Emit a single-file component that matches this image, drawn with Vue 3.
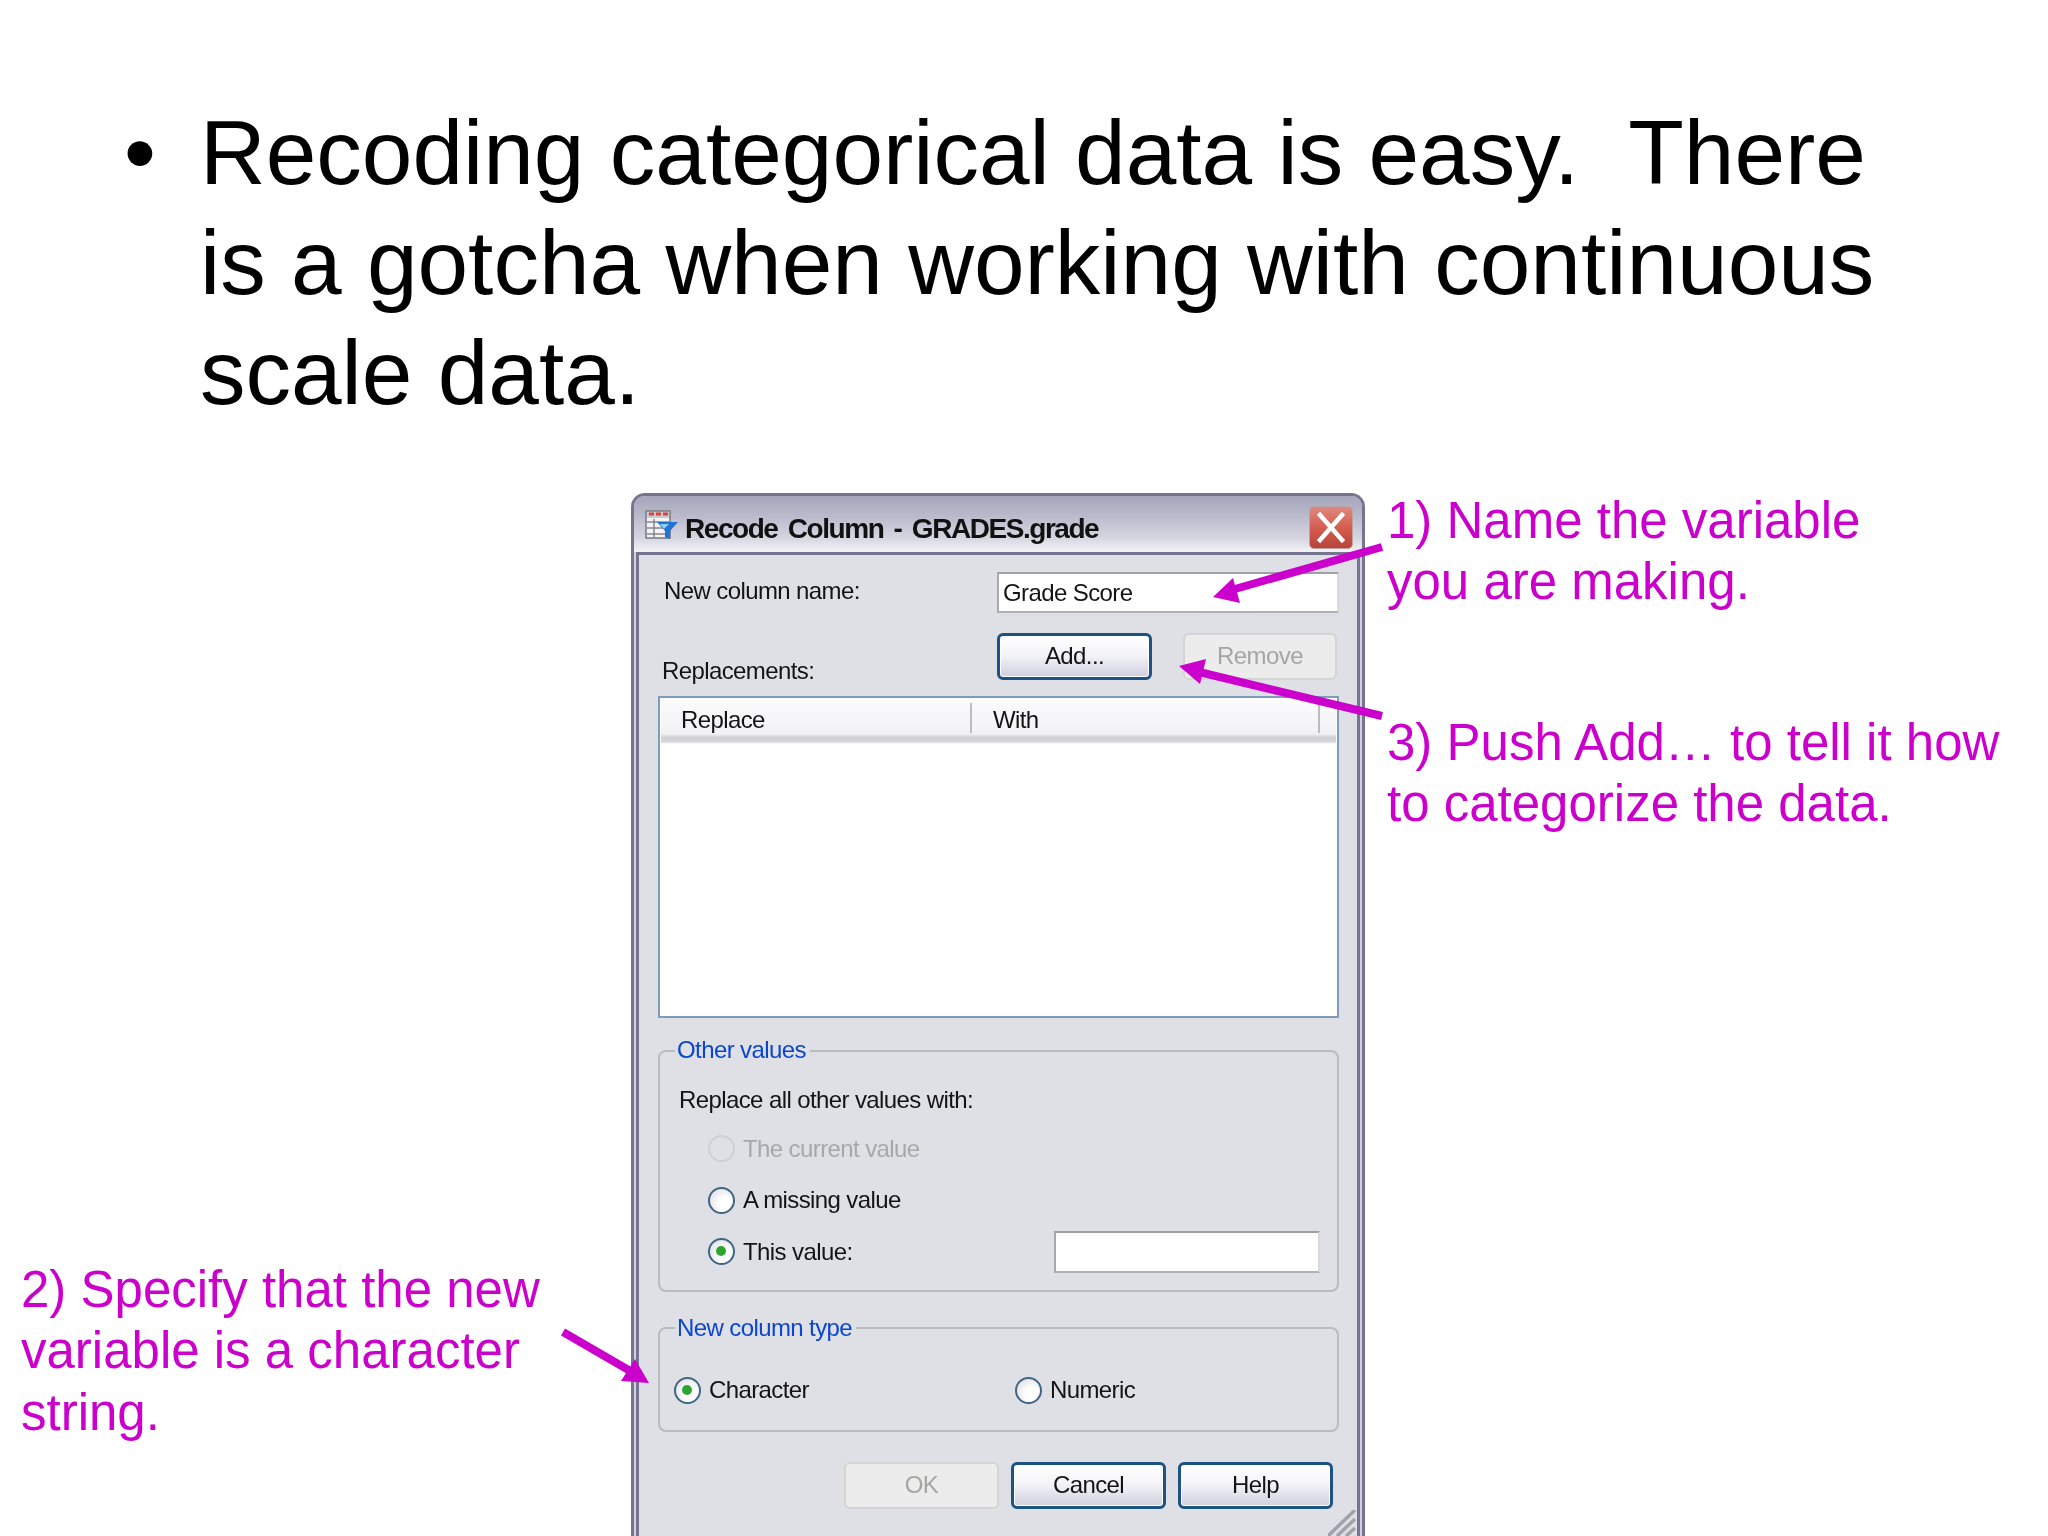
<script setup>
const otherRows = [
  { id: 'current', label: 'The current value', checked: false, disabled: true },
  { id: 'missing', label: 'A missing value', checked: false, disabled: false },
  { id: 'value', label: 'This value:', checked: true, disabled: false, field: true }
]
</script>

<template>
  <div class="slide">
    <div class="bullet">
      <span class="dot">•</span>
      <p class="copy">Recoding categorical data is easy.&nbsp; There<br>is a gotcha when working with continuous<br>scale data.</p>
    </div>

    <div class="window">
      <header class="titlebar">
        <svg class="appicon" viewBox="0 0 33 30" width="33" height="30">
          <rect x="1" y="1" width="24" height="27" fill="#f4f4f4" stroke="#77777f" stroke-width="1.5"/>
          <rect x="2" y="2" width="22" height="6" fill="#c9c9cf"/>
          <path d="M4 4h5M11 4h5M18 4h5" stroke="#d8433c" stroke-width="3"/>
          <path d="M2 12h22M2 18h22M2 24h22M9 9v18" stroke="#85858d" stroke-width="1.5"/>
          <path d="M12 12h21l-8 9v8l-5-2v-6z" fill="#1f74d6"/>
          <path d="M15 14h9l-5 5z" fill="#8fd0f5"/>
        </svg>
        <span class="title">Recode Column - GRADES.grade</span>
        <span class="close">
          <svg viewBox="0 0 44 43" width="44" height="43">
            <path d="M11 9l22 25M33 9L11 34" stroke="#fff" stroke-width="4.5" stroke-linecap="square"/>
          </svg>
        </span>
      </header>

      <div class="body">
        <div class="top">
          <label class="name-label">New column name:</label>
          <div class="field name-field">Grade Score</div>
          <label class="rep-label">Replacements:</label>
          <div class="btn-row">
            <button class="btn add">Add...</button>
            <button class="btn off remove">Remove</button>
          </div>
        </div>

        <div class="list">
          <div class="list-head">
            <span class="col col-a"><span class="col-text">Replace</span></span>
            <span class="col col-b"><span class="col-text">With</span></span>
          </div>
        </div>

        <section class="group other">
          <span class="legend">Other values</span>
          <div class="replace-text">Replace all other values with:</div>
          <div v-for="r in otherRows" :key="r.id" class="radio-row" :class="{ muted: r.disabled }">
            <span class="radio" :class="{ on: r.checked, dis: r.disabled }"></span>
            <span>{{ r.label }}</span>
            <span v-if="r.field" class="field value-field"></span>
          </div>
        </section>

        <section class="group type">
          <span class="legend">New column type</span>
          <div class="type-grid">
            <div class="radio-row"><span class="radio on"></span><span>Character</span></div>
            <div class="radio-row"><span class="radio"></span><span>Numeric</span></div>
          </div>
        </section>

        <footer class="actions">
          <button class="btn off">OK</button>
          <button class="btn">Cancel</button>
          <button class="btn">Help</button>
        </footer>
      </div>

      <svg class="grip" viewBox="0 0 30 26" width="30" height="26">
        <path d="M0 26L27 0M9 26L27 9M18 26L27 18" stroke="#a2a2aa" stroke-width="3.5"/>
      </svg>
    </div>

    <p class="note note-1">1) Name the variable<br>you are making.</p>
    <p class="note note-3">3) Push Add… to tell it how<br>to categorize the data.</p>
    <p class="note note-2">2) Specify that the new<br>variable is a character<br>string.</p>

    <svg class="arrows" viewBox="0 0 2048 1536" width="2048" height="1536">
      <path d="M1382 547L1228 591" stroke="#cc00cc" stroke-width="8"/>
      <path d="M1213 597L1233 578L1240 603Z" fill="#cc00cc"/>
      <path d="M1382 716L1195 671" stroke="#cc00cc" stroke-width="8"/>
      <path d="M1179 666L1206 659L1200 684Z" fill="#cc00cc"/>
      <path d="M563 1332L632 1372" stroke="#cc00cc" stroke-width="8"/>
      <path d="M649 1383L635 1359L621 1381Z" fill="#cc00cc"/>
    </svg>
  </div>
</template>

<style>
html, body { margin: 0; background: #fff; }
</style>

<style scoped>
.slide {
  position: relative;
  width: 2048px;
  height: 1536px;
  overflow: hidden;
  background: #fff;
  font-family: "Liberation Sans", Arial, sans-serif;
}
.bullet {
  box-sizing: border-box;
  display: flex;
  padding: 98px 0 0 124px;
  height: 426px;
  color: #000;
  font-size: 91px;
  line-height: 110px;
  filter: blur(0.4px);
}
.dot { width: 76px; flex: none; }
.copy { margin: 0; white-space: nowrap; }

.window {
  position: relative;
  margin: 67px 0 0 631px;
  width: 734px;
  height: 1043px;
  box-sizing: border-box;
  border: 3px solid #75758f;
  border-bottom: 0;
  border-radius: 14px 14px 0 0;
  background: #d2d2de;
  filter: blur(0.6px);
  font-size: 24px;
  letter-spacing: -0.6px;
  color: #141414;
}
.titlebar {
  display: flex;
  align-items: center;
  height: 56px;
  padding: 0 9px 0 11px;
  border-radius: 11px 11px 0 0;
  background: linear-gradient(#a6a6bc 0%, #b9b9cb 35%, #d6d6e1 75%, #f3f3f7 100%);
}
.appicon { flex: none; margin-top: 2px; }
.title {
  margin: 10px 0 0 7px;
  font-size: 28px;
  font-weight: 700;
  letter-spacing: -1.45px;
  word-spacing: 4px;
  color: #111;
  white-space: nowrap;
}
.close {
  display: block;
  width: 44px;
  height: 43px;
  margin: 7px 0 0 auto;
  border-radius: 5px;
  border: 1px solid #b9a5a5;
  box-sizing: border-box;
  background: linear-gradient(#e0897f, #d25a4c 55%, #b8433a);
}
.close svg { display: block; margin: -1px; }
.body {
  box-sizing: border-box;
  height: 984px;
  margin: 0 2px;
  padding: 0 18px 0 19px;
  border: 3px solid #75758f;
  border-bottom: 0;
  background: #dfdfe6;
}
.top {
  display: grid;
  grid-template-columns: 339px 342px;
  grid-template-rows: 41px 47px;
  row-gap: 20px;
  padding-top: 17px;
}
.name-label { align-self: center; padding-left: 6px; margin-top: -3px; }
.rep-label { align-self: end; padding-left: 4px; margin-bottom: -5px; line-height: 28px; }
.field {
  box-sizing: border-box;
  background: #fff;
  border: 2px solid #abaab2;
  border-top-color: #a0a0a8;
  border-left-color: #a8a8b0;
  border-right-color: #d8d8de;
  border-bottom-color: #b0b0b8;
}
.name-field { padding: 4px 0 0 4px; line-height: 30px; }
.btn-row { display: flex; gap: 31px; }
.btn {
  box-sizing: border-box;
  width: 155px;
  height: 47px;
  padding: 0 0 2px;
  border: 3px solid #1d5384;
  border-radius: 6px;
  background: linear-gradient(#fff 0%, #f4f4f8 45%, #d0d0e0 100%);
  box-shadow: inset 0 0 0 1px #fff;
  font: inherit;
  letter-spacing: inherit;
  color: #141414;
}
.btn.off {
  border: 2px solid #d4d4d2;
  background: #ececec;
  box-shadow: none;
  color: #a5a5a3;
}
.btn.remove { width: 154px; }
.list {
  box-sizing: border-box;
  height: 322px;
  margin-top: 16px;
  border: 2px solid #7f9db9;
  background: #fff;
}
.list-head {
  position: relative;
  height: 46px;
  display: grid;
  grid-template-columns: 311px 1fr;
  align-items: start;
  padding-top: 5px;
  margin: 0 1px;
  box-sizing: border-box;
  background: linear-gradient(#fcfcfd 0%, #f2f2f4 78%, #cfcfd4 86%, #d8d8dc 95%, #fff 100%);
}
.col { height: 30px; line-height: 30px; box-sizing: border-box; }
.col-text { display: block; padding-top: 2px; }
.col-a { padding-left: 20px; border-right: 2px solid #bcbcc2; }
.col-b { padding-left: 21px; margin-right: 16px; border-right: 2px solid #bcbcc2; }
.group {
  position: relative;
  box-sizing: border-box;
  border: 2px solid #babac1;
  border-radius: 8px;
}
.other { height: 242px; margin-top: 32px; padding: 33px 17px 0 19px; }
.type { height: 105px; margin-top: 35px; padding: 39px 0 0 14px; }
.legend {
  position: absolute;
  top: -16px;
  left: 15px;
  padding: 0 4px 0 2px;
  line-height: 28px;
  background: #dfdfe6;
  color: #0a46cf;
  white-space: nowrap;
}
.type .legend { top: -15px; }
.replace-text { line-height: 30px; margin-bottom: 8px; }
.radio-row {
  display: flex;
  align-items: center;
  gap: 8px;
  height: 51.5px;
}
.other .radio-row { padding-left: 29px; }
.muted { color: #a8a8a8; }
.radio {
  position: relative;
  flex: none;
  box-sizing: border-box;
  width: 27px;
  height: 27px;
  border: 2.5px solid #3f6583;
  border-radius: 50%;
  background: radial-gradient(circle at 65% 65%, #ffffff 30%, #d8d8e0 100%);
}
.radio.dis { border-color: #cfcfd3; background: transparent; }
.radio.on::after {
  content: "";
  position: absolute;
  left: 6px;
  top: 6px;
  width: 10px;
  height: 10px;
  border-radius: 50%;
  background: #2fa52f;
}
.value-field { width: 266px; height: 42px; margin-left: auto; }
.type-grid {
  display: grid;
  grid-template-columns: 341px 1fr;
}
.type .radio-row { height: 44px; }
.actions {
  display: flex;
  justify-content: flex-end;
  gap: 12px;
  margin-top: 30px;
  padding-right: 6px;
}
.grip { position: absolute; right: 4px; bottom: 0; }
.note {
  position: absolute;
  margin: 0;
  font-size: 51px;
  line-height: 61.3px;
  color: #cc00cc;
  white-space: nowrap;
  filter: blur(0.3px);
}
.note-1 { left: 1387px; top: 490px; }
.note-3 { left: 1387px; top: 712px; }
.note-2 { left: 21px; top: 1259px; }
.arrows { position: absolute; left: 0; top: 0; pointer-events: none; }
</style>
